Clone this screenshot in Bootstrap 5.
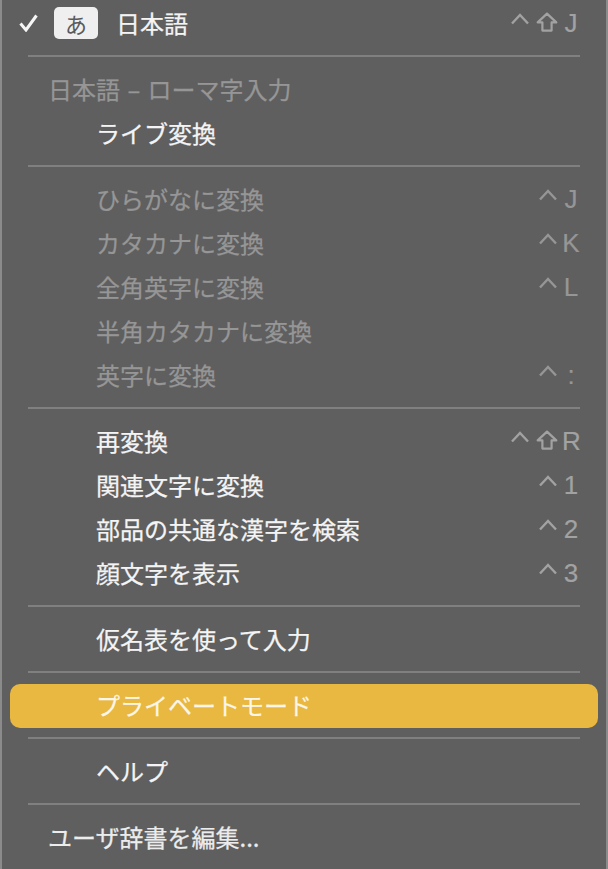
<!DOCTYPE html>
<html lang="ja">
<head>
<meta charset="utf-8">
<title>日本語入力メニュー</title>
<link href="https://cdn.jsdelivr.net/npm/bootstrap@5.3.0/dist/css/bootstrap.min.css" rel="stylesheet">
<style>
html,body{height:100%;margin:0;background:#5f5f5f;overflow:hidden}
.ime-menu.dropdown-menu{display:block;position:static;width:608px;height:869px;margin:0;padding:2px 0 0;background:#5f5f5f;border:0;border-left:2px solid #8b8b8b;border-right:2px solid #8b8b8b;border-radius:0;font-family:"Noto Sans CJK JP","Liberation Sans",sans-serif;font-size:24px;min-width:0}
.ime-menu .dropdown-item{height:44px;line-height:42px;padding:0 26px 2px 94px;color:#f4f4f4;background:transparent;display:flex;align-items:center;justify-content:space-between;white-space:nowrap;border-radius:10px;-webkit-text-stroke:.25px currentColor}
.ime-menu .dropdown-item.disabled{color:#969696}
.ime-menu .dropdown-item.active{background:#e9b840;color:#fbf6e8;margin:0 8px;width:588px;padding-left:86px}
.ime-menu .dropdown-item.hdr{padding-left:46px;word-spacing:2px}
.ime-menu .dropdown-item.end-item{padding-left:46px;color:#ececec}
.ime-menu .dropdown-item.top-item{padding-left:17px;justify-content:flex-start}
.ime-sep{height:22px;display:flex;align-items:center;padding:0 26px;margin:0;list-style:none}
.ime-sep hr{width:100%;height:2px;margin:-2px 0 0;border:0;background:#808080;opacity:1}
.tick{width:19px;height:18px;flex:none;margin-right:16px}
.kana-chip{width:44px;height:32px;background:#efefef;color:#5a5a5a;border-radius:5px;display:flex;align-items:center;justify-content:center;font-size:22px;line-height:1;margin-right:18px;flex:none;-webkit-text-stroke:0}
.keys{display:flex;align-items:center;color:#a2a2a2;margin-left:auto;-webkit-text-stroke:.2px currentColor}
.disabled .keys{color:#969696}
.keys .cap{width:18px;height:12px;flex:none;margin-top:-8px}
.keys .shf{width:22px;height:20px;flex:none;margin:-3px 4px 0 7px}
.keys .ltr{width:18px;margin-left:5px;text-align:center;font-family:"Liberation Sans",Arial,sans-serif;font-size:26px;line-height:42px}
.keys .shf + .ltr{margin-left:0}
</style>
</head>
<body>
<svg width="0" height="0" class="position-absolute" aria-hidden="true">
<symbol id="cap" viewBox="0 0 18 12"><path d="M1 10.5 9 2l8 8.5" fill="none" stroke="currentColor" stroke-width="2.4"/></symbol>
<symbol id="shf" viewBox="0 0 22 20"><path d="M11 1.6 20.3 10.4H15.6V18.6H6.4V10.4H1.7Z" fill="none" stroke="currentColor" stroke-width="2.2" stroke-linejoin="round"/></symbol>
</svg>
<ul class="dropdown-menu ime-menu">
<li><a class="dropdown-item top-item" href="#"><svg class="tick" viewBox="0 0 19 18"><path d="M1.5 9.5 7 16 17.5 1.5" fill="none" stroke="#f6f6f6" stroke-width="3"/></svg><span class="kana-chip">あ</span><span>日本語</span><span class="keys"><svg class="cap"><use href="#cap"/></svg><svg class="shf"><use href="#shf"/></svg><span class="ltr">J</span></span></a></li>
<li class="ime-sep"><hr></li>
<li><a class="dropdown-item disabled hdr">日本語 – ローマ字入力</a></li>
<li><a class="dropdown-item" href="#">ライブ変換</a></li>
<li class="ime-sep"><hr></li>
<li><a class="dropdown-item disabled">ひらがなに変換<span class="keys"><svg class="cap"><use href="#cap"/></svg><span class="ltr">J</span></span></a></li>
<li><a class="dropdown-item disabled">カタカナに変換<span class="keys"><svg class="cap"><use href="#cap"/></svg><span class="ltr">K</span></span></a></li>
<li><a class="dropdown-item disabled">全角英字に変換<span class="keys"><svg class="cap"><use href="#cap"/></svg><span class="ltr">L</span></span></a></li>
<li><a class="dropdown-item disabled">半角カタカナに変換</a></li>
<li><a class="dropdown-item disabled">英字に変換<span class="keys"><svg class="cap"><use href="#cap"/></svg><span class="ltr">:</span></span></a></li>
<li class="ime-sep"><hr></li>
<li><a class="dropdown-item" href="#">再変換<span class="keys"><svg class="cap"><use href="#cap"/></svg><svg class="shf"><use href="#shf"/></svg><span class="ltr">R</span></span></a></li>
<li><a class="dropdown-item" href="#">関連文字に変換<span class="keys"><svg class="cap"><use href="#cap"/></svg><span class="ltr">1</span></span></a></li>
<li><a class="dropdown-item" href="#">部品の共通な漢字を検索<span class="keys"><svg class="cap"><use href="#cap"/></svg><span class="ltr">2</span></span></a></li>
<li><a class="dropdown-item" href="#">顔文字を表示<span class="keys"><svg class="cap"><use href="#cap"/></svg><span class="ltr">3</span></span></a></li>
<li class="ime-sep"><hr></li>
<li><a class="dropdown-item" href="#">仮名表を使って入力</a></li>
<li class="ime-sep"><hr></li>
<li><a class="dropdown-item active" href="#">プライベートモード</a></li>
<li class="ime-sep"><hr></li>
<li><a class="dropdown-item" href="#">ヘルプ</a></li>
<li class="ime-sep"><hr></li>
<li><a class="dropdown-item end-item" href="#">ユーザ辞書を編集...</a></li>
</ul>
<script src="https://cdn.jsdelivr.net/npm/bootstrap@5.3.0/dist/js/bootstrap.bundle.min.js"></script>
</body>
</html>
